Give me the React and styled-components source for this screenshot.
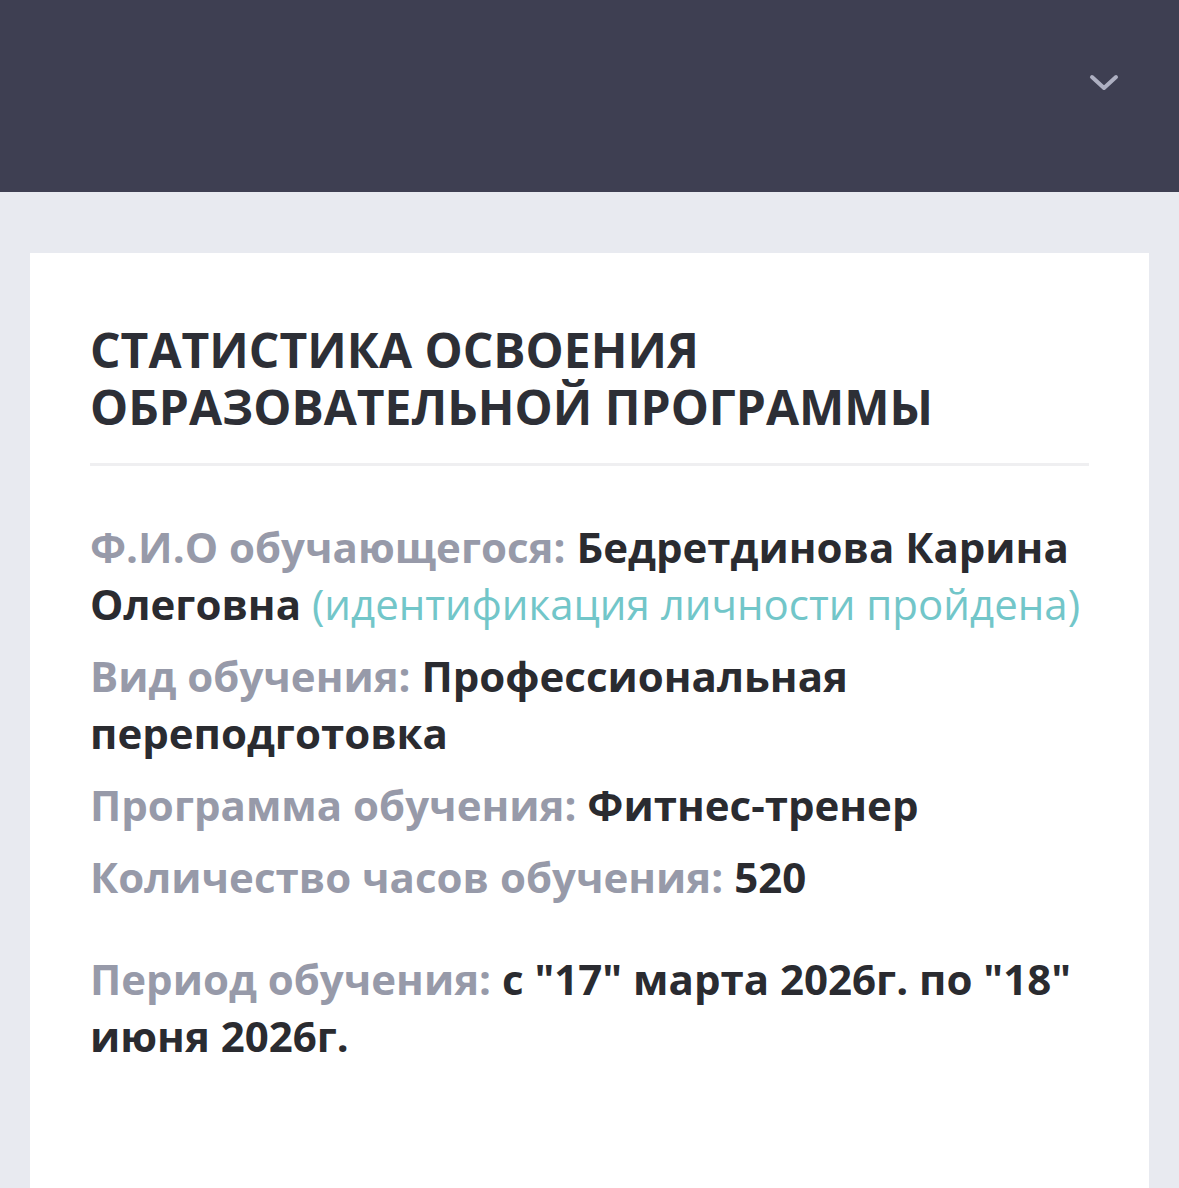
import React from 'react';
import styled, { createGlobalStyle } from 'styled-components';

const GlobalStyle = createGlobalStyle`
  html, body {
    margin: 0;
    padding: 0;
    background: #e8eaf0;
    font-family: "Open Sans", "Noto Sans", sans-serif;
  }
`;

const Header = styled.header`
  height: 192px;
  background: #3e3f52;
  display: flex;
  justify-content: flex-end;
  align-items: flex-start;
  padding: 70px 60px 0 0;
  box-sizing: border-box;
`;

const ToggleButton = styled.button`
  background: none;
  border: none;
  padding: 0;
  cursor: pointer;
  width: 30px;
  height: 24px;
  display: flex;
  align-items: center;
  justify-content: center;
`;

const Page = styled.main`
  padding: 61px 30px 0 30px;
`;

const Card = styled.section`
  background: #fff;
  min-height: 1000px;
  padding: 68px 60px 40px 60px;
  box-sizing: border-box;
`;

const Title = styled.h1`
  margin: 0;
  font-size: 48px;
  line-height: 57px;
  font-weight: 700;
  color: #2d2f36;
  text-transform: uppercase;
  padding-bottom: 28px;
  border-bottom: 3px solid #efeff1;
`;

const InfoList = styled.div`
  padding-top: 52px;
`;

const Row = styled.p`
  margin: 0 0 ${p => p.$gap || 15}px 0;
  font-size: 42px;
  line-height: 57px;
  font-weight: 700;
  color: #2a2b30;
`;

const Label = styled.span`
  color: #979aa9;
`;

const Note = styled.span`
  color: #72c6c9;
  font-weight: 400;
`;

function Chevron() {
  return (
    <svg width="30" height="20" viewBox="0 0 30 20" fill="none">
      <path d="M3 5l12 11L27 5" stroke="#aeb0c2" strokeWidth="4" strokeLinecap="round" strokeLinejoin="round" />
    </svg>
  );
}

export default function App() {
  return (
    <>
      <GlobalStyle />
      <Header>
        <ToggleButton aria-label="menu">
          <Chevron />
        </ToggleButton>
      </Header>
      <Page>
        <Card>
          <Title>Статистика освоения образовательной программы</Title>
          <InfoList>
            <Row>
              <Label>Ф.И.О обучающегося:</Label> Бедретдинова Карина Олеговна{' '}
              <Note>(идентификация личности пройдена)</Note>
            </Row>
            <Row>
              <Label>Вид обучения:</Label> Профессиональная переподготовка
            </Row>
            <Row>
              <Label>Программа обучения:</Label> Фитнес-тренер
            </Row>
            <Row $gap={45}>
              <Label>Количество часов обучения:</Label> 520
            </Row>
            <Row>
              <Label>Период обучения:</Label> с "17" марта 2026г. по "18" июня 2026г.
            </Row>
          </InfoList>
        </Card>
      </Page>
    </>
  );
}
